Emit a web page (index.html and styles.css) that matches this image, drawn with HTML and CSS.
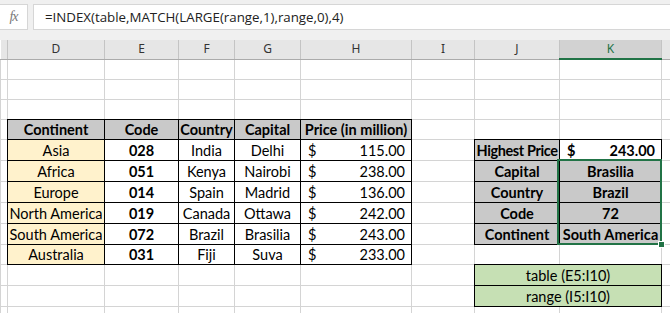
FILE: index.html
```html
<!DOCTYPE html>
<html>
<head>
<meta charset="utf-8">
<link rel="stylesheet" href="styles.css">
</head>
<body>
<div class="app">
  <div class="fbar">
    <div class="fx"><span>fx</span></div>
    <div class="formula">=INDEX(table,MATCH(LARGE(range,1),range,0),4)</div>
  </div>
  <div class="sheet-wrap">
    <table class="sheet">
      <colgroup>
        <col class="c-c"><col class="c-d"><col class="c-e"><col class="c-f"><col class="c-g"><col class="c-h"><col class="c-i"><col class="c-j"><col class="c-k"><col class="c-l">
      </colgroup>
      <thead>
        <tr><th></th><th>D</th><th>E</th><th>F</th><th>G</th><th>H</th><th>I</th><th>J</th><th class="sel">K</th><th></th></tr>
      </thead>
      <tbody>
        <tr class="r20"><td></td><td></td><td></td><td></td><td></td><td></td><td></td><td></td><td></td><td></td></tr>
        <tr class="r20"><td></td><td></td><td></td><td></td><td></td><td></td><td></td><td></td><td></td><td></td></tr>
        <tr class="r20"><td></td><td></td><td></td><td></td><td></td><td></td><td></td><td></td><td></td><td></td></tr>
        <tr class="r20">
          <td></td>
          <td class="b hd">Continent</td><td class="b hd">Code</td><td class="b hd">Country</td><td class="b hd">Capital</td><td class="b hd">Price (in million)</td>
          <td></td><td></td><td></td><td></td>
        </tr>
        <tr class="r21">
          <td></td>
          <td class="b cont">Asia</td><td class="b code">028</td><td class="b">India</td><td class="b">Delhi</td>
          <td class="b money"><span class="m"><span>$</span><span>115.00</span></span></td>
          <td></td>
          <td class="b hd tight">Highest Price</td>
          <td class="b money bold"><span class="m"><span>$</span><span>243.00</span></span></td>
          <td></td>
        </tr>
        <tr class="r21">
          <td></td>
          <td class="b cont">Africa</td><td class="b code">051</td><td class="b">Kenya</td><td class="b">Nairobi</td>
          <td class="b money"><span class="m"><span>$</span><span>238.00</span></span></td>
          <td></td>
          <td class="b hd">Capital</td><td class="b hd">Brasilia</td>
          <td></td>
        </tr>
        <tr class="r21">
          <td></td>
          <td class="b cont">Europe</td><td class="b code">014</td><td class="b">Spain</td><td class="b">Madrid</td>
          <td class="b money"><span class="m"><span>$</span><span>136.00</span></span></td>
          <td></td>
          <td class="b hd">Country</td><td class="b hd">Brazil</td>
          <td></td>
        </tr>
        <tr class="r21">
          <td></td>
          <td class="b cont">North America</td><td class="b code">019</td><td class="b">Canada</td><td class="b">Ottawa</td>
          <td class="b money"><span class="m"><span>$</span><span>242.00</span></span></td>
          <td></td>
          <td class="b hd">Code</td><td class="b hd">72</td>
          <td></td>
        </tr>
        <tr class="r21">
          <td></td>
          <td class="b cont">South America</td><td class="b code">072</td><td class="b">Brazil</td><td class="b">Brasilia</td>
          <td class="b money"><span class="m"><span>$</span><span>243.00</span></span></td>
          <td></td>
          <td class="b hd">Continent</td><td class="b hd wide">South America</td>
          <td></td>
        </tr>
        <tr class="r20">
          <td></td>
          <td class="b cont">Australia</td><td class="b code">031</td><td class="b">Fiji</td><td class="b">Suva</td>
          <td class="b money"><span class="m"><span>$</span><span>233.00</span></span></td>
          <td></td><td></td><td></td><td></td>
        </tr>
        <tr class="r21">
          <td></td><td></td><td></td><td></td><td></td><td></td><td></td>
          <td class="b named" colspan="2">table (E5:I10)</td>
          <td></td>
        </tr>
        <tr class="r21">
          <td></td><td></td><td></td><td></td><td></td><td></td><td></td>
          <td class="b named" colspan="2">range (I5:I10)</td>
          <td></td>
        </tr>
        <tr class="r20"><td></td><td></td><td></td><td></td><td></td><td></td><td></td><td></td><td></td><td></td></tr>
      </tbody>
    </table>
    <div class="selection"><span class="handle"></span></div>
  </div>
</div>
</body>
</html>
```

FILE: styles.css
```css
* { box-sizing: border-box; }
html, body { margin: 0; padding: 0; }
body {
  width: 670px;
  height: 313px;
  overflow: hidden;
  background: #ffffff;
}
.app {
  width: 670px;
  height: 313px;
  overflow: hidden;
  background: #f0f0f0;
}
.fbar {
  height: 40px;
  display: flex;
  align-items: flex-start;
  padding-top: 4px;
  gap: 5px;
  background: #f0f0f0;
}
.fx {
  width: 28px;
  height: 26px;
  background: #ffffff;
  border: 1px solid #d6d6d6;
  border-left: none;
  display: flex;
  align-items: center;
  justify-content: center;
}
.fx span {
  font-family: "Liberation Serif", serif;
  font-style: italic;
  font-size: 14px;
  color: #7a7a7a;
  letter-spacing: -1px;
}
.formula {
  flex: 1;
  height: 26px;
  background: #ffffff;
  border: 1px solid #d6d6d6;
  border-right: none;
  padding-left: 11px;
  font-family: "Open Sans", sans-serif;
  font-size: 13.3px;
  line-height: 24px;
  color: #222222;
  white-space: nowrap;
}
.sheet-wrap {
  position: relative;
  background: #ffffff;
  height: 273px;
  overflow: hidden;
}
.sheet {
  border-collapse: collapse;
  table-layout: fixed;
  width: 670px;
  font-family: Lato, "Liberation Sans", sans-serif;
  font-size: 14.5px;
  color: #000000;
}
.c-c { width: 7px; }
.c-d { width: 97px; }
.c-e { width: 74px; }
.c-f { width: 56px; }
.c-g { width: 66px; }
.c-h { width: 111px; }
.c-i { width: 63px; }
.c-j { width: 85px; }
.c-k { width: 102px; }
.c-l { width: 9px; }
.sheet th {
  height: 19px;
  padding: 0;
  background: #e6e6e6;
  border-right: 1px solid #c4c4c4;
  border-bottom: 1px solid #ababab;
  font-family: "Noto Sans", sans-serif;
  font-weight: normal;
  font-size: 12px;
  color: #333333;
  text-align: center;
  vertical-align: middle;
  line-height: 18px;
}
.sheet th.sel {
  background: #d2d2d2;
  border-bottom: 2px solid #217346;
  color: #217346;
}
.sheet td {
  padding: 0;
  border: 1px solid #d4d4d4;
  border-top: none;
  text-align: center;
  vertical-align: middle;
  white-space: nowrap;
  overflow: hidden;
  line-height: 16px;
  padding-top: 2px;
}
.sheet tr.r20 td { height: 20px; }
.sheet tr.r21 td { height: 21px; }
.sheet td.b { border: 1px double #000000; }
.sheet td.hd {
  background: #c9c9c9;
  font-weight: bold;
}
.sheet td.cont { background: #fff2cc; }
.sheet td.code { font-weight: bold; }
.sheet td.bold { font-weight: bold; }
.sheet td.tight { overflow: visible; letter-spacing: -0.4px; }
.sheet td.wide { overflow: visible; letter-spacing: 0.1px; }
.sheet td.named { background: #c6e0b4; }
.m {
  display: flex;
  justify-content: space-between;
  padding: 0 6px 0 7px;
}
.selection {
  position: absolute;
  left: 557px;
  top: 119px;
  width: 105px;
  height: 86px;
  border: 2px solid #217346;
  pointer-events: none;
}
.handle {
  position: absolute;
  right: -5px;
  bottom: -5px;
  width: 7px;
  height: 7px;
  background: #217346;
  border: 1px solid #ffffff;
}
```
